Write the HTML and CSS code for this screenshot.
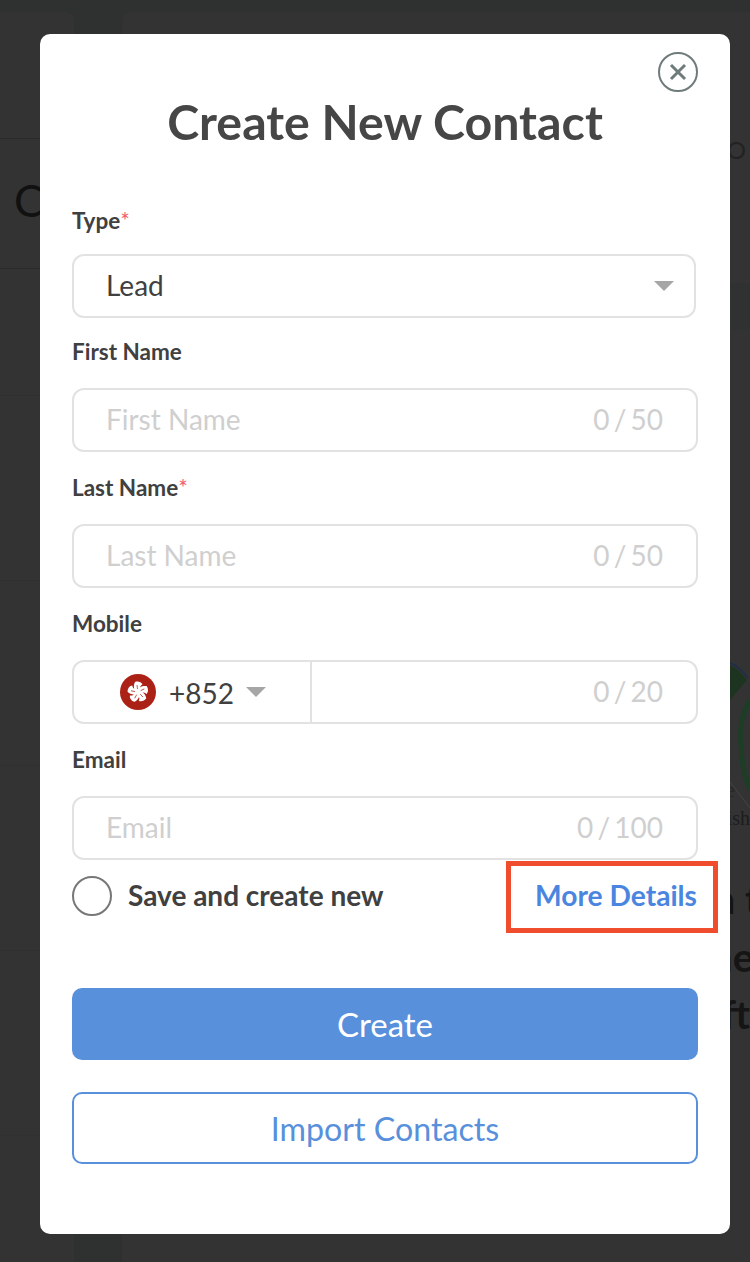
FILE: index.html
```html
<!DOCTYPE html>
<html lang="en">
<head>
  <meta charset="UTF-8">
  <meta name="viewport" content="width=device-width, initial-scale=1.0">
  <title>Create New Contact</title>
  <link rel="stylesheet" href="styles.css">
</head>
<body>

  <!-- Page behind the dialog -->
  <div class="page">
    <div class="page-side">
      <div class="side-top"></div>
      <div class="side-title">C</div>
      <div class="side-rows"></div>
    </div>
    <div class="page-main">
      <div class="main-top">O</div>
      <div class="main-band"></div>
      <div class="main-chart">
        <svg width="38" height="170" viewBox="0 0 38 170">
          <path d="M18 5 Q28 10 35 20 Q26 30 18 40 Z" fill="#1d3420"/>
          <path d="M18 3 Q28 7 36 18" fill="none" stroke="#1d2e4d" stroke-width="1.5"/>
          <path d="M38 40 Q26 60 29 85 Q30 112 38 130" fill="none" stroke="#1d3d26" stroke-width="5"/>
          <path d="M18 122 L38 148" fill="none" stroke="#454545" stroke-width="1"/>
        </svg>
      </div>
      <div class="main-caption caption-short">e</div>
      <div class="main-caption">ish</div>
      <div class="main-copy">
        <p class="copy-one">n t</p>
        <p class="copy-two">he</p>
        <p>ft</p>
      </div>
    </div>
  </div>

  <div class="overlay">
    <section class="modal">
      <button class="close-button" aria-label="Close">
        <svg width="40" height="40" viewBox="0 0 40 40">
          <circle cx="20" cy="20" r="19" fill="none" stroke="#6f7b7b" stroke-width="2"/>
          <path d="M13 13 L27 27 M27 13 L13 27" fill="none" stroke="#6f7b7b" stroke-width="3"/>
        </svg>
      </button>

      <h1>Create New Contact</h1>

      <div class="field field-first">
        <label>Type<span class="required">*</span></label>
        <div class="box box-select">
          <span class="value">Lead</span>
          <span class="arrow"></span>
        </div>
      </div>

      <div class="field field-second">
        <label>First Name</label>
        <div class="box">
          <span class="placeholder">First Name</span>
          <span class="count">0 / 50</span>
        </div>
      </div>

      <div class="field">
        <label>Last Name<span class="required">*</span></label>
        <div class="box">
          <span class="placeholder">Last Name</span>
          <span class="count">0 / 50</span>
        </div>
      </div>

      <div class="field">
        <label>Mobile</label>
        <div class="box box-phone">
          <div class="country">
            <svg class="flag" width="36" height="36" viewBox="0 0 36 36">
              <circle cx="18" cy="18" r="18" fill="#ab2115"/>
              <g fill="#fff">
                <g id="petal">
                  <path d="M18 18.5 C13.5 16.5 13 12 15 8 C18 7 21.5 8 22.5 10.5 C20.5 11.5 19.5 13 20.5 15 C20.5 17 19.5 18 18 18.5 Z"/>
                  <path d="M17 11 L17.5 15" fill="none" stroke="#ab2115" stroke-width="0.7"/>
                </g>
                <use href="#petal" transform="rotate(72 18 18)"/>
                <use href="#petal" transform="rotate(144 18 18)"/>
                <use href="#petal" transform="rotate(216 18 18)"/>
                <use href="#petal" transform="rotate(288 18 18)"/>
              </g>
            </svg>
            <span class="value code">+852</span>
            <span class="arrow"></span>
          </div>
          <div class="phone">
            <span class="count">0 / 20</span>
          </div>
        </div>
      </div>

      <div class="field">
        <label>Email</label>
        <div class="box">
          <span class="placeholder">Email</span>
          <span class="count">0 / 100</span>
        </div>
      </div>

      <div class="options">
        <div class="save-new">
          <span class="radio"></span>
          <span class="save-label">Save and create new</span>
        </div>
        <a class="more-details" href="#">More Details</a>
      </div>

      <button class="btn btn-create">Create</button>
      <button class="btn btn-import">Import Contacts</button>
    </section>
  </div>

</body>
</html>
```

FILE: styles.css
```css
* {
  margin: 0;
  padding: 0;
  box-sizing: border-box;
}

html, body {
  height: 1262px;
  overflow: hidden;
}

body {
  position: relative;
  font-family: 'Lato', sans-serif;
  background-color: #2f3130;
  color: #404040;
}

/* Page behind the dialog */
.page {
  display: grid;
  grid-template-columns: 74px 1fr;
  column-gap: 48px;
  height: 100%;
  padding-top: 12px;
}

.page-side,
.page-main {
  background-color: #333;
}

.page-side {
  border-top-right-radius: 8px;
}

.side-top {
  height: 127px;
  border-bottom: 1px solid #2a2a2a;
}

.side-title {
  height: 130px;
  border-bottom: 1px solid #2a2a2a;
  padding-left: 14px;
  font-size: 44px;
  line-height: 122px;
  color: #111;
}

.side-rows {
  height: 992px;
  background-image: repeating-linear-gradient(to bottom, #333 0, #333 184px, #303030 184px, #303030 185px);
  background-position: 0 -58px;
}

.page-main {
  border-top-left-radius: 8px;
  text-align: right;
  overflow: hidden;
}

.main-top {
  height: 271px;
  padding-top: 124px;
  padding-right: 4px;
  font-size: 24px;
  line-height: 28px;
  color: #222;
}

.main-band {
  height: 47px;
  background-color: #303231;
}

.main-chart {
  height: 446px;
  padding-top: 330px;
  line-height: 0;
}

.main-caption {
  font-family: 'Liberation Serif', serif;
  font-size: 20px;
  line-height: 28px;
  color: #1d1d1d;
  position: relative;
}

.caption-short {
  padding-right: 15px;
  color: #282828;
}

.main-copy {
  padding-top: 39px;
  font-size: 40px;
  line-height: 57.5px;
  font-weight: 700;
  color: #151515;
  white-space: nowrap;
}

.copy-one {
  margin-right: -10px;
}

.copy-two {
  margin-right: -4px;
}

/* Dialog */
.overlay {
  position: absolute;
  top: 0;
  left: 0;
  width: 100%;
  padding: 34px 20px 0 40px;
}

.modal {
  position: relative;
  height: 1200px;
  padding: 0 32px;
  background-color: #fff;
  border-radius: 10px;
}

.close-button {
  position: absolute;
  top: 18px;
  right: 32px;
  width: 40px;
  height: 40px;
  background: none;
  border: none;
  line-height: 0;
}

h1 {
  padding-top: 57px;
  font-size: 48.3px;
  line-height: 60px;
  font-weight: 700;
  color: #464646;
  text-align: center;
}

.field {
  margin-top: 22px;
}

.field-first {
  margin-top: 56px;
}

.field-second {
  margin-top: 20px;
}

.field label {
  display: block;
  margin-bottom: 22px;
  font-size: 22.5px;
  line-height: 28px;
  font-weight: 700;
}

.field-first label {
  margin-bottom: 19px;
}

.required {
  color: #f4606f;
  font-weight: 400;
}

.box {
  display: flex;
  align-items: center;
  justify-content: space-between;
  height: 64px;
  padding: 0 33px 2px 32px;
  border: 2px solid #e2e2e2;
  border-radius: 12px;
  font-size: 28px;
}

.box-select {
  width: 624px;
  padding-right: 20px;
}

.box-select .arrow {
  margin-top: 2px;
}

.placeholder,
.count {
  color: #cfcfcf;
}

.count {
  word-spacing: -3px;
}

.arrow {
  width: 0;
  height: 0;
  border-left: 10px solid transparent;
  border-right: 10px solid transparent;
  border-top: 10px solid #a6a6a6;
}

.box-phone {
  padding: 0;
}

.country {
  display: flex;
  align-items: center;
  width: 238px;
  height: 100%;
  padding-left: 46px;
  border-right: 2px solid #e2e2e2;
}

.flag {
  margin-right: 13px;
}

.code {
  padding-top: 2px;
}

.country .arrow {
  margin-left: 12px;
}

.phone {
  flex: 1;
  padding-right: 33px;
  padding-bottom: 2px;
  text-align: right;
}

.options {
  display: flex;
  align-items: center;
  justify-content: space-between;
  height: 72px;
  margin-top: 1px;
  font-size: 28px;
  font-weight: 700;
}

.save-new {
  display: flex;
  align-items: center;
  gap: 16px;
  margin-bottom: 2px;
}

.save-label {
  padding-bottom: 2px;
}

.radio {
  width: 40px;
  height: 40px;
  border: 2px solid #777;
  border-radius: 50%;
}

.more-details {
  margin-right: -20px;
  padding: 0 16px 0 24px;
  height: 72px;
  font-size: 28.2px;
  line-height: 58px;
  border: 5px solid #f04c2e;
  color: #4a86e0;
  text-decoration: none;
}

.btn {
  display: block;
  width: 100%;
  height: 72px;
  border-radius: 10px;
  font-family: 'Lato', sans-serif;
  font-size: 32.2px;
}

.btn-create {
  margin-top: 55px;
  background-color: #5890dc;
  border: none;
  color: #fff;
  font-size: 33px;
}

.btn-import {
  margin-top: 32px;
  background-color: #fff;
  border: 2px solid #5890dc;
  color: #5890dc;
}
```
